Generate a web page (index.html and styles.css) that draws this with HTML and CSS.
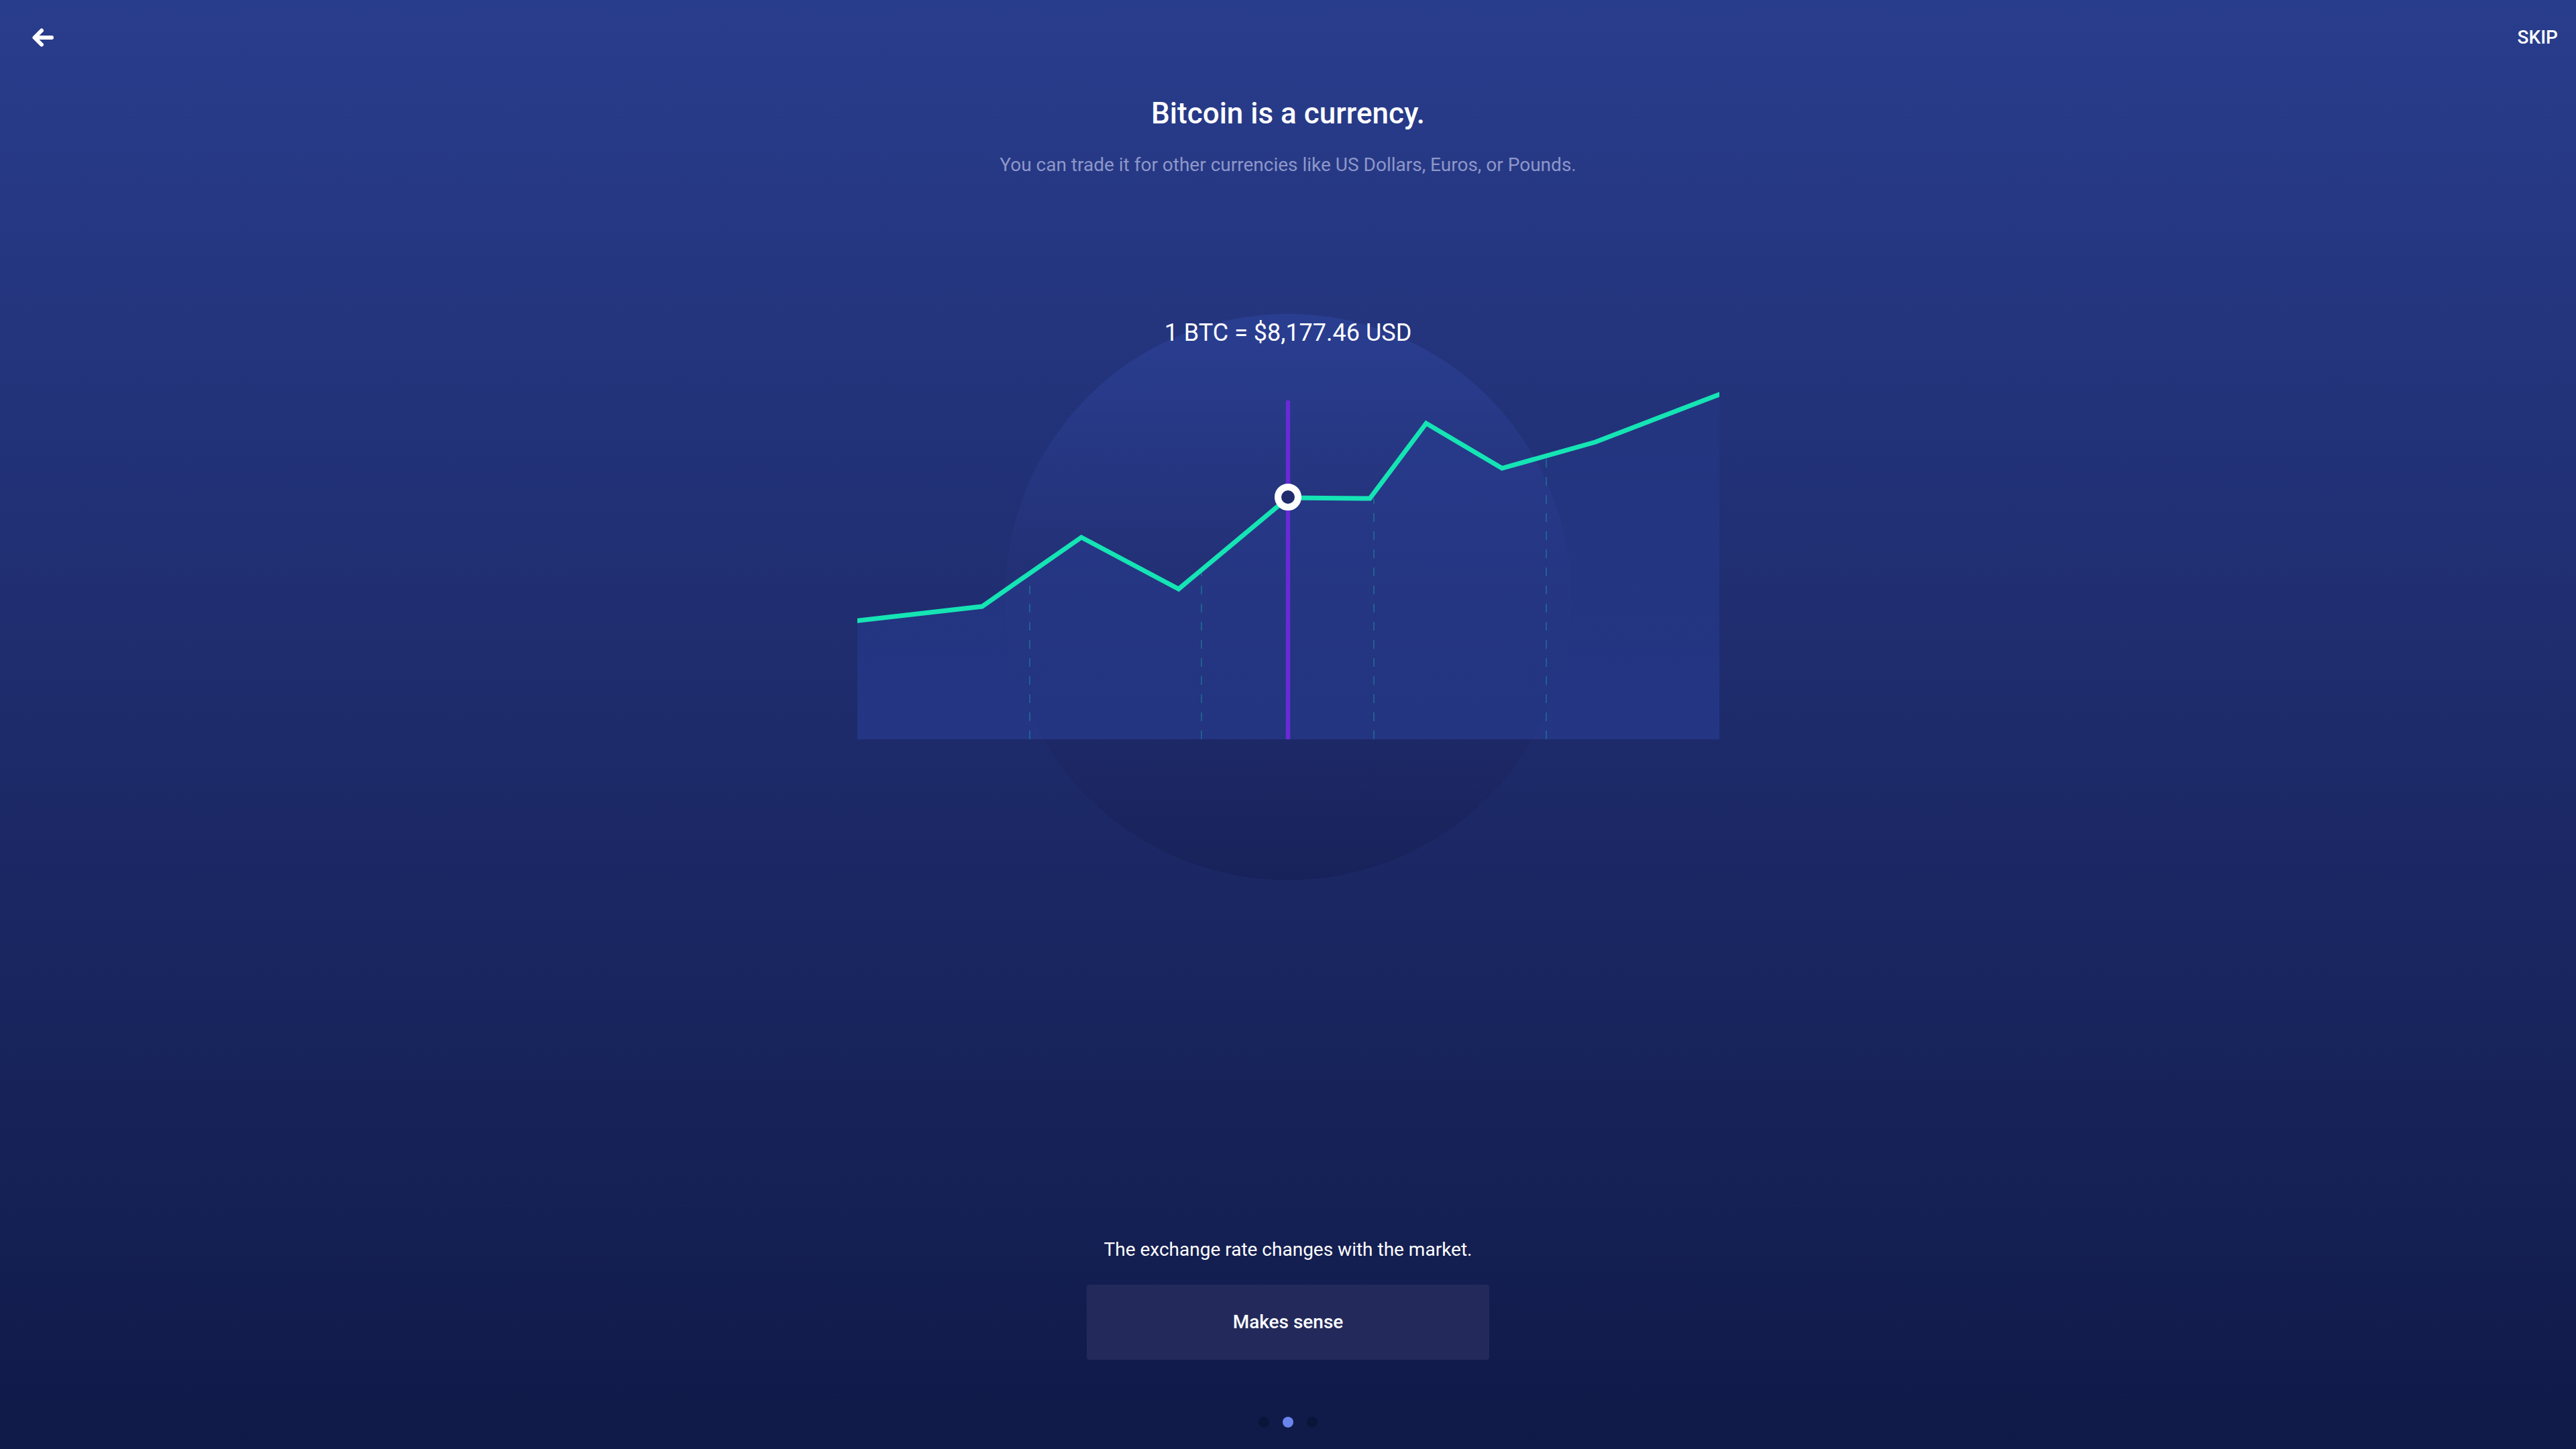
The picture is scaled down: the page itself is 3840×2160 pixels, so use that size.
FILE: index.html
```html
<!DOCTYPE html>
<html lang="en">
<head>
<meta charset="utf-8">
<title>Bitcoin is a currency</title>
<link rel="stylesheet" href="styles.css">
</head>
<body>
<div class="screen">
  <header class="topbar">
    <svg class="back" viewBox="0 0 32 28" aria-label="Back">
      <path d="M29 14H4M14 3.5L3.5 14L14 24.5" fill="none" stroke="#fff" stroke-width="6" stroke-linecap="round" stroke-linejoin="round"/>
    </svg>
    <span class="skip">SKIP</span>
  </header>

  <section class="intro">
    <h1 class="title">Bitcoin is a currency.</h1>
    <p class="subtitle">You can trade it for other currencies like US Dollars, Euros, or Pounds.</p>
  </section>

  <section class="stage">
    <div class="halo"></div>
    <div class="rate">1 BTC = $8,177.46 USD</div>
    <svg class="chart" viewBox="0 0 1285 542" width="1285" height="542">
      <defs>
        <linearGradient id="area" x1="0" y1="0" x2="0" y2="542" gradientUnits="userSpaceOnUse">
          <stop offset="0" stop-color="rgb(44,70,170)" stop-opacity="0.1"/>
          <stop offset="1" stop-color="rgb(44,70,170)" stop-opacity="0.4"/>
        </linearGradient>
      </defs>
      <polygon fill="url(#area)" points="0,365.3 186,344 334,241 479,318 642,182 764,183 848,71 961,138 1100,99 1285,28 1285,542 0,542"/>
      <g stroke="rgba(21,228,180,0.25)" stroke-width="2" stroke-dasharray="13 14">
        <line x1="257" y1="542" x2="257" y2="294"/>
        <line x1="513" y1="542" x2="513" y2="290"/>
        <line x1="770" y1="542" x2="770" y2="183"/>
        <line x1="1027" y1="542" x2="1027" y2="120"/>
      </g>
      <line x1="642" y1="37" x2="642" y2="543" stroke="#6a2ad8" stroke-width="6.5"/>
      <polyline fill="none" stroke="#15e4b4" stroke-width="7" stroke-linejoin="miter" points="-20,367.6 0,365.3 186,344 334,241 479,318 642,182 764,183 848,71 961,138 1100,99 1285,28 1320,14.6"/>
      <circle cx="642" cy="181" r="15" fill="#1f2b6c" stroke="#fff" stroke-width="10"/>
    </svg>
  </section>

  <footer class="footer">
    <p class="caption">The exchange rate changes with the market.</p>
    <button class="cta" type="button">Makes sense</button>
    <div class="dots">
      <span class="dot"></span>
      <span class="dot active"></span>
      <span class="dot"></span>
    </div>
  </footer>
</div>
</body>
</html>
```

FILE: styles.css
```css
* {
  box-sizing: border-box;
  margin: 0;
  padding: 0;
}

html,
body {
  width: 3840px;
  height: 2160px;
}

body {
  font-family: Roboto, "Noto Sans", "Liberation Sans", sans-serif;
  color: #ffffff;
  background: linear-gradient(180deg, #293d8d 0%, #1e2b6b 50%, #101a48 100%);
  overflow: hidden;
}

.screen {
  height: 2160px;
  display: flex;
  flex-direction: column;
}

.topbar {
  height: 112px;
  display: flex;
  align-items: center;
  justify-content: space-between;
  padding: 0 27px 0 48px;
}

.back {
  display: block;
  width: 32px;
  height: 28px;
  overflow: visible;
}

.skip {
  font-size: 28px;
  line-height: 32px;
  font-weight: 500;
}

.intro {
  margin-top: 31px;
  text-align: center;
}

.title {
  font-size: 44px;
  line-height: 52px;
  font-weight: 500;
}

.subtitle {
  margin-top: 35px;
  font-size: 28px;
  line-height: 32px;
  font-weight: 400;
  color: #8e97c9;
}

.stage {
  position: relative;
  width: 1285px;
  height: 844px;
  margin: 206px auto 0;
}

.halo {
  position: absolute;
  top: 0;
  left: 50%;
  width: 844px;
  height: 844px;
  margin-left: -422px;
  border-radius: 50%;
  background: linear-gradient(180deg, #2a3e91 0%, #222f73 50%, #18225a 100%);
}

.rate {
  position: relative;
  padding-top: 8px;
  text-align: center;
  font-size: 36px;
  line-height: 40px;
  font-weight: 400;
}

.chart {
  position: relative;
  display: block;
  margin-top: 44px;
  width: 1285px;
  height: 542px;
  overflow: hidden;
}

.footer {
  margin-top: auto;
  padding-bottom: 32px;
  display: flex;
  flex-direction: column;
  align-items: center;
}

.caption {
  font-size: 28px;
  line-height: 32px;
  font-weight: 400;
}

.cta {
  margin-top: 36px;
  width: 600px;
  height: 112px;
  border: 0;
  border-radius: 4px;
  background: #232a5b;
  color: #ffffff;
  font-family: Roboto, "Noto Sans", "Liberation Sans", sans-serif;
  font-size: 28px;
  line-height: 32px;
  font-weight: 500;
}

.dots {
  margin-top: 85px;
  display: flex;
  gap: 20px;
}

.dot {
  width: 16px;
  height: 16px;
  border-radius: 50%;
  background: #0b1439;
}

.dot.active {
  background: #6a86ee;
}
```
